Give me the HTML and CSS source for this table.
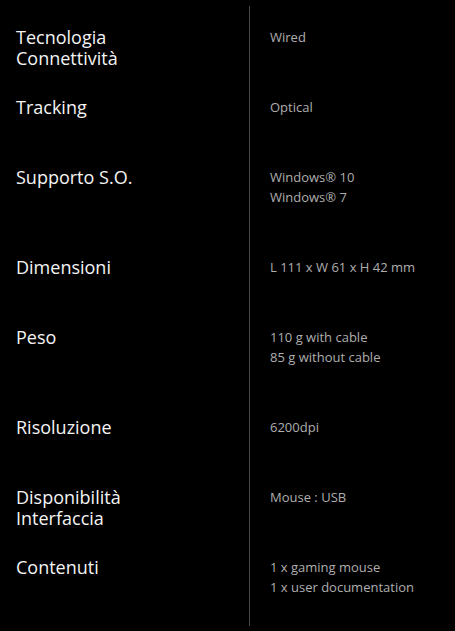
FILE: index.html
```html
<!DOCTYPE html>
<html lang="it">
<head>
<meta charset="utf-8">
<link rel="stylesheet" href="styles.css">
</head>
<body>
<div class="specs">
  <div class="label">Tecnologia<br>Connettività</div>
  <div class="value">Wired</div>
  <div class="label">Tracking</div>
  <div class="value">Optical</div>
  <div class="label">Supporto S.O.</div>
  <div class="value">Windows® 10<br>Windows® 7</div>
  <div class="label">Dimensioni</div>
  <div class="value">L 111 x W 61 x H 42 mm</div>
  <div class="label">Peso</div>
  <div class="value">110 g with cable<br>85 g without cable</div>
  <div class="label">Risoluzione</div>
  <div class="value">6200dpi</div>
  <div class="label">Disponibilità<br>Interfaccia</div>
  <div class="value">Mouse : USB</div>
  <div class="label">Contenuti</div>
  <div class="value">1 x gaming mouse<br>1 x user documentation</div>
</div>
</body>
</html>
```
FILE: styles.css
```css
html, body {
  margin: 0;
  background: #000;
}
body {
  padding-top: 6px;
  font-family: "Open Sans", "Noto Sans", sans-serif;
}
.specs {
  display: grid;
  grid-template-columns: 249px 1fr;
}
.label {
  padding: 21px 0 0 16px;
  font-size: 18px;
  line-height: 21px;
  color: #f4f4f4;
}
.value {
  border-left: 1px solid #4a4a4a;
  padding: 21px 0 29px 20px;
  font-size: 13px;
  line-height: 20px;
  color: #aeaeae;
}
```
